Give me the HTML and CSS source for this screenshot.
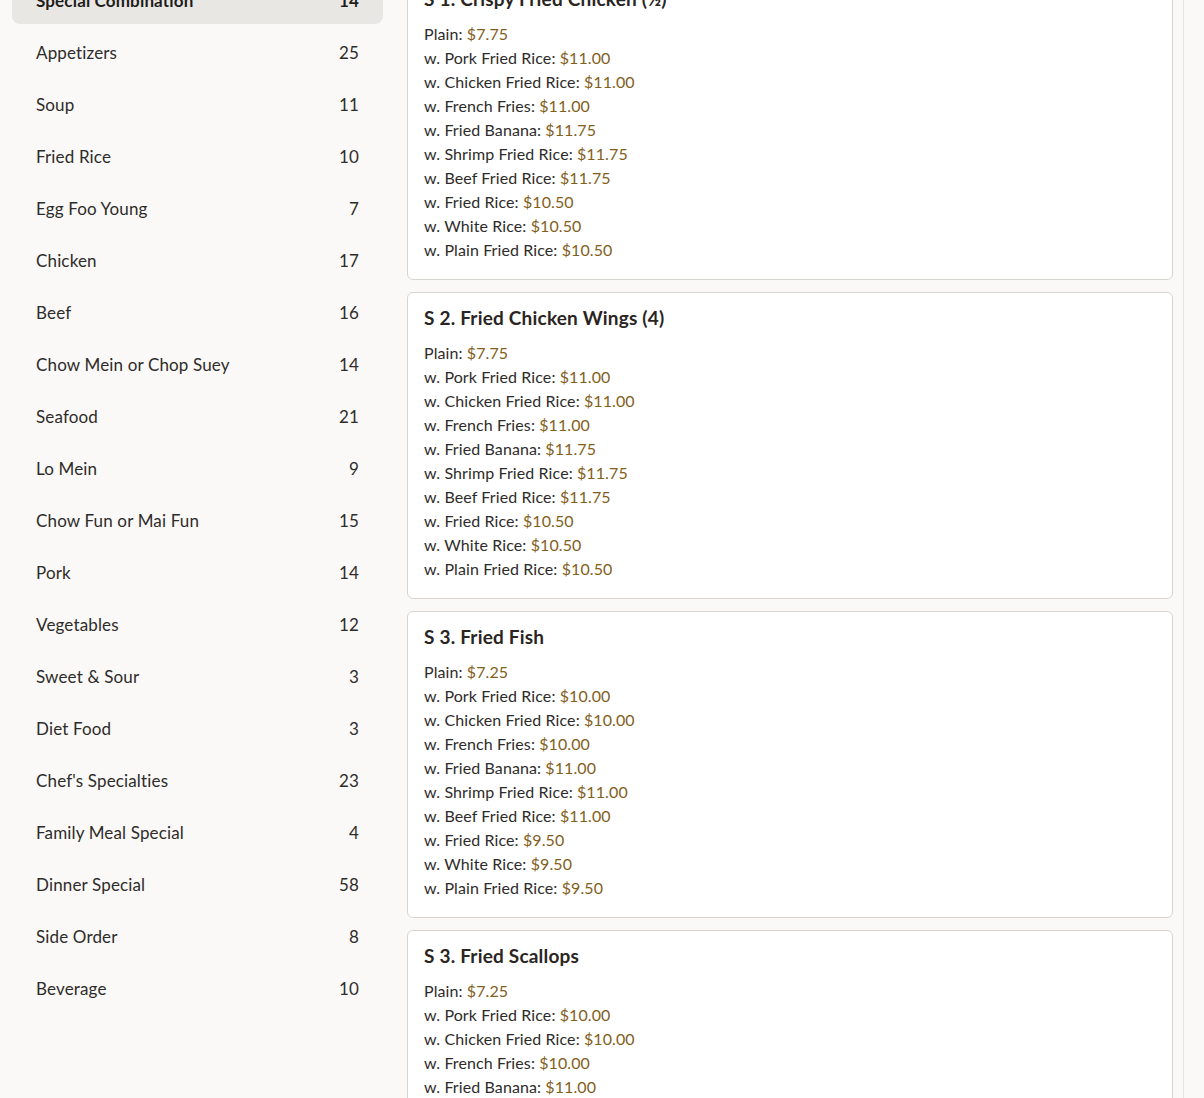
FILE: index.html
```html
<!DOCTYPE html>
<html lang="en">
<head>
  <meta charset="UTF-8">
  <title>Menu</title>
  <meta name="viewport" content="width=device-width, initial-scale=1.0">
  <link rel="stylesheet" href="styles.css">
</head>
<body>
  <div class="page">
    <aside class="sidebar">
      <div class="cat active"><span>Special Combination</span><span>14</span></div>
      <div class="cat"><span>Appetizers</span><span>25</span></div>
      <div class="cat"><span>Soup</span><span>11</span></div>
      <div class="cat"><span>Fried Rice</span><span>10</span></div>
      <div class="cat"><span>Egg Foo Young</span><span>7</span></div>
      <div class="cat"><span>Chicken</span><span>17</span></div>
      <div class="cat"><span>Beef</span><span>16</span></div>
      <div class="cat"><span>Chow Mein or Chop Suey</span><span>14</span></div>
      <div class="cat"><span>Seafood</span><span>21</span></div>
      <div class="cat"><span>Lo Mein</span><span>9</span></div>
      <div class="cat"><span>Chow Fun or Mai Fun</span><span>15</span></div>
      <div class="cat"><span>Pork</span><span>14</span></div>
      <div class="cat"><span>Vegetables</span><span>12</span></div>
      <div class="cat"><span>Sweet &amp; Sour</span><span>3</span></div>
      <div class="cat"><span>Diet Food</span><span>3</span></div>
      <div class="cat"><span>Chef's Specialties</span><span>23</span></div>
      <div class="cat"><span>Family Meal Special</span><span>4</span></div>
      <div class="cat"><span>Dinner Special</span><span>58</span></div>
      <div class="cat"><span>Side Order</span><span>8</span></div>
      <div class="cat"><span>Beverage</span><span>10</span></div>
    </aside>

    <main class="items">
      <div class="card">
        <h3>S 1. Crispy Fried Chicken (½)</h3>
        <div class="opt">Plain: <span class="price">$7.75</span></div>
        <div class="opt">w. Pork Fried Rice: <span class="price">$11.00</span></div>
        <div class="opt">w. Chicken Fried Rice: <span class="price">$11.00</span></div>
        <div class="opt">w. French Fries: <span class="price">$11.00</span></div>
        <div class="opt">w. Fried Banana: <span class="price">$11.75</span></div>
        <div class="opt">w. Shrimp Fried Rice: <span class="price">$11.75</span></div>
        <div class="opt">w. Beef Fried Rice: <span class="price">$11.75</span></div>
        <div class="opt">w. Fried Rice: <span class="price">$10.50</span></div>
        <div class="opt">w. White Rice: <span class="price">$10.50</span></div>
        <div class="opt">w. Plain Fried Rice: <span class="price">$10.50</span></div>
      </div>

      <div class="card">
        <h3>S 2. Fried Chicken Wings (4)</h3>
        <div class="opt">Plain: <span class="price">$7.75</span></div>
        <div class="opt">w. Pork Fried Rice: <span class="price">$11.00</span></div>
        <div class="opt">w. Chicken Fried Rice: <span class="price">$11.00</span></div>
        <div class="opt">w. French Fries: <span class="price">$11.00</span></div>
        <div class="opt">w. Fried Banana: <span class="price">$11.75</span></div>
        <div class="opt">w. Shrimp Fried Rice: <span class="price">$11.75</span></div>
        <div class="opt">w. Beef Fried Rice: <span class="price">$11.75</span></div>
        <div class="opt">w. Fried Rice: <span class="price">$10.50</span></div>
        <div class="opt">w. White Rice: <span class="price">$10.50</span></div>
        <div class="opt">w. Plain Fried Rice: <span class="price">$10.50</span></div>
      </div>

      <div class="card">
        <h3>S 3. Fried Fish</h3>
        <div class="opt">Plain: <span class="price">$7.25</span></div>
        <div class="opt">w. Pork Fried Rice: <span class="price">$10.00</span></div>
        <div class="opt">w. Chicken Fried Rice: <span class="price">$10.00</span></div>
        <div class="opt">w. French Fries: <span class="price">$10.00</span></div>
        <div class="opt">w. Fried Banana: <span class="price">$11.00</span></div>
        <div class="opt">w. Shrimp Fried Rice: <span class="price">$11.00</span></div>
        <div class="opt">w. Beef Fried Rice: <span class="price">$11.00</span></div>
        <div class="opt">w. Fried Rice: <span class="price">$9.50</span></div>
        <div class="opt">w. White Rice: <span class="price">$9.50</span></div>
        <div class="opt">w. Plain Fried Rice: <span class="price">$9.50</span></div>
      </div>

      <div class="card">
        <h3>S 3. Fried Scallops</h3>
        <div class="opt">Plain: <span class="price">$7.25</span></div>
        <div class="opt">w. Pork Fried Rice: <span class="price">$10.00</span></div>
        <div class="opt">w. Chicken Fried Rice: <span class="price">$10.00</span></div>
        <div class="opt">w. French Fries: <span class="price">$10.00</span></div>
        <div class="opt">w. Fried Banana: <span class="price">$11.00</span></div>
        <div class="opt">w. Shrimp Fried Rice: <span class="price">$11.00</span></div>
        <div class="opt">w. Beef Fried Rice: <span class="price">$11.00</span></div>
        <div class="opt">w. Fried Rice: <span class="price">$9.50</span></div>
        <div class="opt">w. White Rice: <span class="price">$9.50</span></div>
        <div class="opt">w. Plain Fried Rice: <span class="price">$9.50</span></div>
      </div>
    </main>
  </div>
</body>
</html>
```

FILE: styles.css
```css
html, body {
  height: 100%;
  overflow: hidden;
}

body {
  margin: 0;
  background-color: #faf9f7;
  color: #2e2c2a;
  font-family: Lato, "Noto Sans", sans-serif;
}

.page {
  display: flex;
  align-items: flex-start;
  gap: 24px;
  padding: 0 20px 0 12px;
  margin-top: -27px;
}

.sidebar {
  width: 371px;
  flex-shrink: 0;
  display: flex;
  flex-direction: column;
  gap: 4px;
  padding-top: 3px;
}

.cat {
  display: flex;
  justify-content: space-between;
  align-items: center;
  height: 48px;
  padding: 0 24px;
  border-radius: 8px;
  font-size: 17px;
  letter-spacing: 0.15px;
  color: #2e2c2a;
}

.cat.active {
  background-color: #e8e7e4;
  font-weight: bold;
  color: #1f1d1b;
}

.items {
  flex: 1;
  display: flex;
  flex-direction: column;
  gap: 12px;
  padding-right: 10px;
  border-right: 1px solid #e6e4e0;
  min-height: 1200px;
}

.card {
  background: #fff;
  border: 1px solid #d8d5d0;
  border-radius: 6px;
  padding: 12px 16px 17px;
}

.card h3 {
  margin: 0 0 10px;
  font-size: 19px;
  line-height: 26px;
  font-weight: bold;
  letter-spacing: 0.2px;
  color: #2a2522;
}

.opt {
  font-size: 16px;
  line-height: 24px;
  letter-spacing: 0.1px;
}

.price {
  color: #82601c;
}
```
